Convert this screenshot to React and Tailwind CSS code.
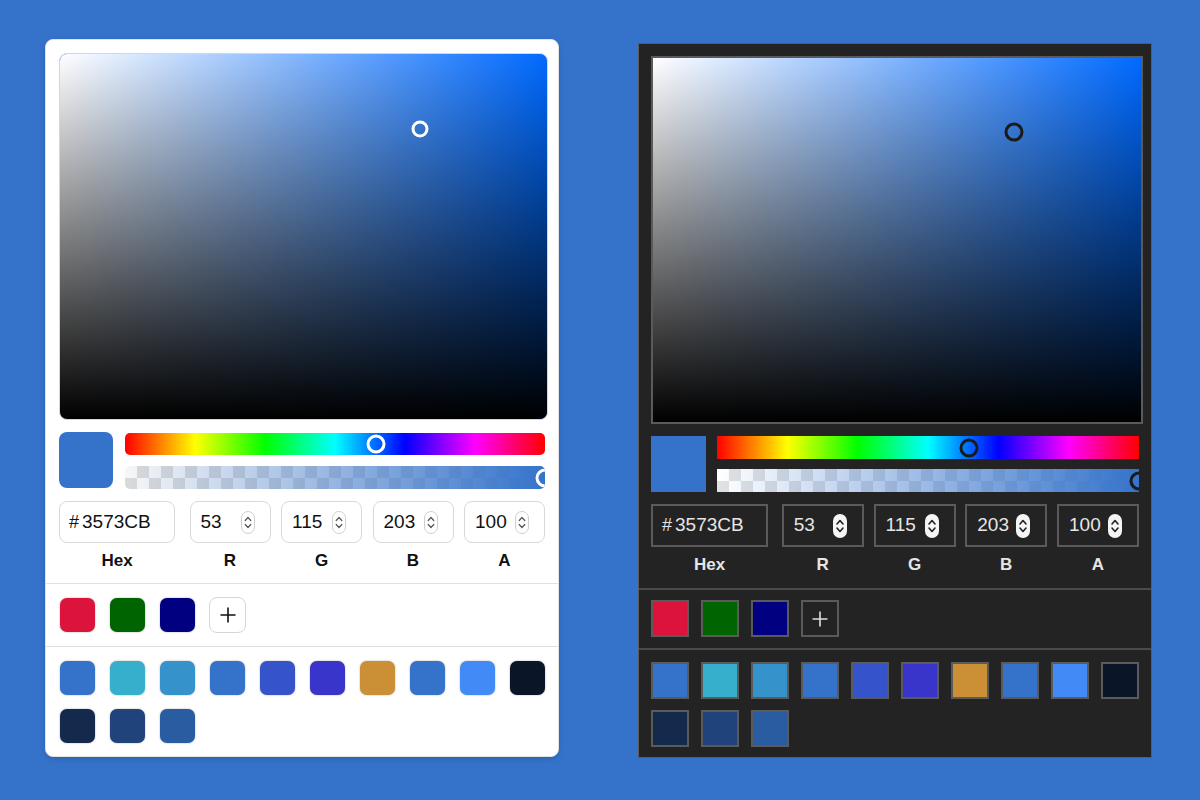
import React from "react";

const customColors = ["#DC143C", "#006400", "#000080"];
const presetColors = [
  "#3573CB", "#35AFCB", "#3592CB", "#3573CB", "#3554CB", "#3935CB", "#CB8F35",
  "#3573CB", "#428AF5", "#0A1528", "#132A4D", "#1F437A", "#2A5CA2",
];

const fields = [
  { label: "R", value: "53" },
  { label: "G", value: "115" },
  { label: "B", value: "203" },
  { label: "A", value: "100" },
];

const Spinner = ({ dark }) =>
  dark ? (
    <svg width="14" height="24" viewBox="0 0 14 24">
      <rect x="0" y="0" width="14" height="24" rx="7" fill="#f5f5f5" />
      <path d="M4 10 L7 6.5 L10 10" fill="none" stroke="#222" strokeWidth="1.6" strokeLinecap="round" strokeLinejoin="round" />
      <path d="M4 14 L7 17.5 L10 14" fill="none" stroke="#222" strokeWidth="1.6" strokeLinecap="round" strokeLinejoin="round" />
    </svg>
  ) : (
    <svg width="14" height="23" viewBox="0 0 14 23">
      <rect x="0.5" y="0.5" width="13" height="22" rx="6.5" fill="#fff" stroke="#cfcfcf" />
      <path d="M4.2 9.5 L7 6.5 L9.8 9.5" fill="none" stroke="#555" strokeWidth="1.2" strokeLinecap="round" strokeLinejoin="round" />
      <path d="M4.2 13.5 L7 16.5 L9.8 13.5" fill="none" stroke="#555" strokeWidth="1.2" strokeLinecap="round" strokeLinejoin="round" />
    </svg>
  );

const Plus = ({ color }) => (
  <svg width="18" height="18" viewBox="0 0 18 18">
    <path d="M9 1.5 V16.5 M1.5 9 H16.5" stroke={color} strokeWidth="1.6" />
  </svg>
);

const Picker = ({ dark }) => {
  const panel = dark
    ? "w-[514px] bg-[#232323] border border-[#5c5c5c] mt-[4px]"
    : "w-[514px] bg-white rounded-[8px] border border-[#e2e2e2] shadow-[0_2px_6px_rgba(0,0,0,0.15)]";
  const text = dark ? "text-[#e6e6e6]" : "text-[#111]";
  const inputBox = dark
    ? "h-[43px] border-2 border-[#5a5a5a] flex items-center"
    : "h-[42px] border border-[#d9d9d9] rounded-[8px] flex items-center";
  const divider = dark ? "h-[2px] bg-[#4a4a4a]" : "h-px bg-[#e0e0e0]";
  const swatch = dark
    ? "w-[38px] h-[37px] border-2 border-[#5a5a5a]"
    : "w-[35px] h-[34px] rounded-[7px] shadow-[0_0_2px_rgba(0,0,0,0.35)]";

  return (
    <div className={panel} style={{ fontFamily: '"Liberation Sans", Arial, sans-serif' }}>
      <div className={dark ? "px-[12px] pt-[12px]" : "px-[13px] pt-[13px]"}>
        {/* saturation / value area */}
        <div
          className={
            dark
              ? "relative h-[368px] -mr-[4px] bg-[#006aff] border-2 border-[#5a5a5a]"
              : "relative h-[367px] -mr-[3px] bg-[#006aff] rounded-[8px] border border-[#d6d6d6] overflow-hidden"
          }
        >
          <div className="absolute inset-0 bg-[linear-gradient(to_right,#fff,rgba(255,255,255,0))]" />
          <div className="absolute inset-0 bg-[linear-gradient(to_top,#000,rgba(0,0,0,0))]" />
          <div
            className={
              dark
                ? "absolute left-[73.9%] top-[20.4%] -translate-x-1/2 -translate-y-1/2 w-[19px] h-[19px] rounded-full border-[3.5px] border-[#1a1a1a]"
                : "absolute left-[73.9%] top-[20.6%] -translate-x-1/2 -translate-y-1/2 w-[17px] h-[17px] rounded-full border-[3px] border-white"
            }
          />
        </div>

        {/* preview + sliders */}
        <div className={dark ? "flex gap-[11px] mt-[12px]" : "flex gap-[12px] mt-[12px]"}>
          <div className={dark ? "w-[55px] h-[56px] bg-[#3573CB]" : "w-[54px] h-[56px] rounded-[8px] bg-[#3573CB]"} />
          <div className={dark ? "flex-1 flex flex-col gap-[10px]" : "flex-1 flex flex-col gap-[11px] pt-[1px]"}>
            <div
              className={
                dark
                  ? "relative h-[23px] bg-[linear-gradient(to_right,#f00,#ff0,#0f0,#0ff,#00f,#f0f,#f00)]"
                  : "relative h-[22px] rounded-[5px] bg-[linear-gradient(to_right,#f00,#ff0,#0f0,#0ff,#00f,#f0f,#f00)]"
              }
            >
              <div
                className={
                  dark
                    ? "absolute left-[59.7%] top-1/2 -translate-x-1/2 -translate-y-1/2 w-[19px] h-[19px] rounded-full border-[3.5px] border-[#1a1a1a]"
                    : "absolute left-[59.7%] top-1/2 -translate-x-1/2 -translate-y-1/2 w-[19px] h-[19px] rounded-full border-[3px] border-white"
                }
              />
            </div>
            <div
              className={
                dark
                  ? "relative h-[23px] overflow-hidden bg-[conic-gradient(#e2e2e2_25%,#fff_0_50%,#e2e2e2_0_75%,#fff_0)] bg-[length:24px_24px]"
                  : "relative h-[23px] overflow-hidden rounded-[5px] bg-[conic-gradient(#dadada_25%,#f7f7f7_0_50%,#dadada_0_75%,#f7f7f7_0)] bg-[length:24px_24px]"
              }
            >
              <div className="absolute inset-0 bg-[linear-gradient(to_right,rgba(53,115,203,0),#3573cb)]" />
              <div
                className={
                  dark
                    ? "absolute left-full top-1/2 -translate-x-1/2 -translate-y-1/2 w-[19px] h-[19px] rounded-full border-[3.5px] border-[#1a1a1a]"
                    : "absolute left-full top-1/2 -translate-x-1/2 -translate-y-1/2 w-[19px] h-[19px] rounded-full border-[3px] border-white"
                }
              />
            </div>
          </div>
        </div>

        {/* inputs */}
        <div
          className={
            dark
              ? "grid grid-cols-[121px_82px_82px_82px_82px] justify-between mt-[12px]"
              : "grid grid-cols-[120px_81px_81px_81px_81px] justify-between mt-[12px]"
          }
        >
          <div className={`${inputBox} ${dark ? "w-[117px]" : "w-[116px]"} pl-[9px] ${text}`}>
            <span className="text-[18px]">#</span>
            <span className="text-[19px] ml-[3px]">3573CB</span>
          </div>
          {fields.map((f) => (
            <div key={f.label} className={`${inputBox} justify-between pl-[10px] pr-[15px] ${text}`}>
              <span className="text-[19px]">{f.value}</span>
              <Spinner dark={dark} />
            </div>
          ))}
          <div className={`${dark ? "w-[117px]" : "w-[116px]"} text-center font-bold text-[17px] leading-[20px] pt-[8px] ${text}`}>Hex</div>
          {fields.map((f) => (
            <div key={f.label} className={`text-center font-bold text-[17px] leading-[20px] pt-[8px] ${text}`}>
              {f.label}
            </div>
          ))}
        </div>
      </div>

      <div className={dark ? "mt-[13px]" : "mt-[12px]"}>
        <div className={divider} />
      </div>

      {/* custom colours */}
      <div className={dark ? "flex items-center gap-[12px] px-[12px] pt-[10px] pb-[11px]" : "flex items-center gap-[15px] px-[14px] py-[13px]"}>
        {customColors.map((c) => (
          <div key={c} className={swatch} style={{ backgroundColor: c }} />
        ))}
        <div
          className={
            dark
              ? "w-[38px] h-[37px] border-2 border-[#5a5a5a] flex items-center justify-center"
              : "w-[37px] h-[36px] -ml-px rounded-[8px] border border-[#d6d6d6] bg-white flex items-center justify-center"
          }
        >
          <Plus color={dark ? "#e0e0e0" : "#111"} />
        </div>
      </div>

      <div className={divider} />

      {/* presets */}
      <div
        className={
          dark
            ? "flex flex-wrap gap-x-[12px] gap-y-[11px] px-[12px] pt-[12px] pb-[10px]"
            : "flex flex-wrap gap-x-[15px] gap-y-[14px] pl-[14px] pr-[10px] pt-[14px] pb-[13px]"
        }
      >
        {presetColors.map((c, i) => (
          <div key={i} className={swatch} style={{ backgroundColor: c }} />
        ))}
      </div>
    </div>
  );
};

export default function App() {
  return (
    <div className="w-[1200px] h-[800px] bg-[#3573cb] overflow-hidden">
      <div className="flex items-start gap-[79px] pl-[45px] pt-[39px]">
        <Picker />
        <Picker dark />
      </div>
    </div>
  );
}
